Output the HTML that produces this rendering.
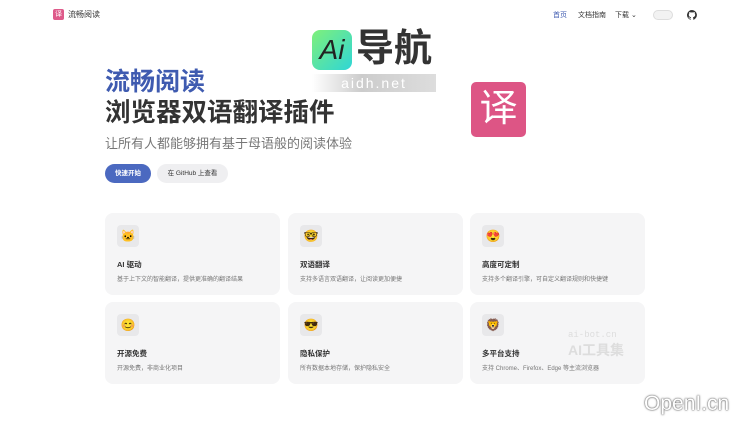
<!DOCTYPE html><html><head><meta charset="utf-8"><style>
*{margin:0;padding:0;box-sizing:border-box}
body{width:750px;height:421px;background:#fff;font-family:"Liberation Sans","Noto Sans CJK SC",sans-serif;position:relative;overflow:hidden;color:#333}
.a{position:absolute}
.card{position:absolute;width:175px;height:82px;background:#f5f5f6;border-radius:8px}
.ic{position:absolute;left:12px;top:12px;width:22px;height:22px;background:#e8e8ea;border-radius:4px;font-size:12px;line-height:22px;text-align:center}
.t{position:absolute;left:12px;top:46px;font-size:7.5px;font-weight:bold;color:#333}
.d{position:absolute;left:12px;top:61px;font-size:6px;color:#777;white-space:nowrap}
</style></head><body>
<div class="a" style="left:53px;top:9px;width:11px;height:11px;background:#de5a8a;border-radius:2px;color:#fff;font-size:7px;line-height:11px;text-align:center">译</div>
<div class="a" style="left:68px;top:9px;font-size:8px;line-height:11px">流畅阅读</div>
<div class="a" style="left:553px;top:10px;font-size:7px;color:#3f5bb0">首页</div>
<div class="a" style="left:578px;top:10px;font-size:7px">文档指南</div>
<div class="a" style="left:615px;top:10px;font-size:7px">下载 ⌄</div>
<div class="a" style="left:653px;top:10px;width:20px;height:10px;border:1px solid #ddd;background:#f2f2f2;border-radius:5px"></div>
<svg class="a" style="left:687px;top:10px" width="10" height="10" viewBox="0 0 16 16"><path fill="#333" d="M8 0a8 8 0 0 0-2.5 15.6c.4 0 .5-.2.5-.4v-1.5c-2.200.5-2.7-1-2.7-1-.4-.9-.9-1.2-.9-1.2-.7-.5.1-.5.1-.5.8.1 1.2.8 1.2.8.7 1.3 1.9.9 2.3.7.1-.5.3-.9.5-1.1-1.8-.2-3.6-.9-3.6-4 0-.9.3-1.6.8-2.1-.1-.2-.4-1 .1-2.1 0 0 .7-.2 2.2.8a7.4 7.4 0 0 1 4 0c1.5-1 2.2-.8 2.2-.8.4 1.1.2 1.9.1 2.1.5.6.8 1.3.8 2.1 0 3.1-1.9 3.8-3.6 4 .3.3.5.8.5 1.5v2.2c0 .2.1.5.6.4A8 8 0 0 0 8 0z"/></svg>
<div class="a" style="left:312px;top:30px;width:40px;height:40px;border-radius:8px;background:linear-gradient(135deg,#7ff07a,#2fd6d6);font-size:28px;font-style:italic;color:#222;line-height:40px;text-align:center">Ai</div>
<div class="a" style="left:356px;top:26px;font-size:38px;color:#333;line-height:46px;font-weight:bold">导航</div>
<div class="a" style="left:312px;top:74px;width:124px;height:18px;background:linear-gradient(90deg,#fff,#ccc 40%,#ddd);color:#fff;font-size:14px;letter-spacing:2px;text-align:center;line-height:18px">aidh.net</div>
<div class="a" style="left:105px;top:66px;font-size:25px;font-weight:bold;color:#3f5bb0;line-height:32px">流畅阅读</div>
<div class="a" style="left:105px;top:97px;font-size:25.5px;font-weight:bold;color:#333;line-height:32px">浏览器双语翻译插件</div>
<div class="a" style="left:105px;top:133px;font-size:13px;color:#777">让所有人都能够拥有基于母语般的阅读体验</div>
<div class="a" style="left:105px;top:164px;width:46px;height:19px;border-radius:10px;background:#4b69c0;color:#fff;font-size:6.5px;font-weight:bold;line-height:19px;text-align:center">快速开始</div>
<div class="a" style="left:157px;top:164px;width:71px;height:19px;border-radius:10px;background:#efeff1;font-size:6.5px;line-height:19px;text-align:center">在 GitHub 上查看</div>
<div class="a" style="left:471px;top:82px;width:55px;height:55px;border-radius:5px;background:#dd5585;color:#fff;font-size:38px;line-height:55px;text-align:center">译</div>
<div class="card" style="left:105px;top:213px"><div class="ic">🐱</div><div class="t">AI 驱动</div><div class="d">基于上下文的智能翻译，提供更准确的翻译结果</div></div>
<div class="card" style="left:288px;top:213px"><div class="ic">🤓</div><div class="t">双语翻译</div><div class="d">支持多语言双语翻译，让阅读更加便捷</div></div>
<div class="card" style="left:470px;top:213px"><div class="ic">😍</div><div class="t">高度可定制</div><div class="d">支持多个翻译引擎，可自定义翻译规则和快捷键</div></div>
<div class="card" style="left:105px;top:302px"><div class="ic">😊</div><div class="t">开源免费</div><div class="d">开源免费，非商业化项目</div></div>
<div class="card" style="left:288px;top:302px"><div class="ic">😎</div><div class="t">隐私保护</div><div class="d">所有数据本地存储，保护隐私安全</div></div>
<div class="card" style="left:470px;top:302px"><div class="ic">🦁</div><div class="t">多平台支持</div><div class="d">支持 Chrome、Firefox、Edge 等主流浏览器</div></div>
<div class="a" style="left:568px;top:330px;font-size:9px;color:#ddd;font-family:'Liberation Mono',monospace">ai-bot.cn</div>
<div class="a" style="left:568px;top:340px;font-size:14px;color:#ddd;font-weight:bold">AI工具集</div>
<div class="a" style="left:644px;top:392px;font-size:21px;color:#fff;text-shadow:0 0 2px #666,0 0 1px #333">OpenI.cn</div>
</body></html>
